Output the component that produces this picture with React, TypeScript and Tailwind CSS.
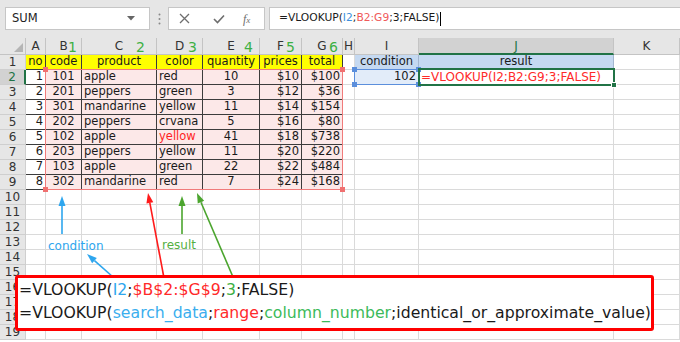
import React from "react";

const COLS = ["A", "B", "C", "D", "E", "F", "G", "H", "I", "J", "K"];

// tabla de ejemplo (filas 2-9)
const DATA: string[][] = [
  ["1", "101", "apple", "red", "10", "$10", "$100"],
  ["2", "201", "peppers", "green", "3", "$12", "$36"],
  ["3", "301", "mandarine", "yellow", "11", "$14", "$154"],
  ["4", "202", "peppers", "crvana", "5", "$16", "$80"],
  ["5", "102", "apple", "yellow", "41", "$18", "$738"],
  ["6", "203", "peppers", "yellow", "11", "$20", "$220"],
  ["7", "103", "apple", "green", "22", "$22", "$484"],
  ["8", "302", "mandarine", "red", "7", "$24", "$168"],
];
const HEAD = ["no", "code", "product", "color", "quantity", "prices", "total"];
const ALIGN = ["justify-end", "justify-center", "justify-start", "justify-start", "justify-center", "justify-end", "justify-end"];

// numeros verdes junto a las letras de columna
const MARKS: Record<string, { n: string; cls: string }> = {
  B: { n: "1", cls: "right-[4px]" },
  C: { n: "2", cls: "right-[11px]" },
  D: { n: "3", cls: "right-[5px]" },
  E: { n: "4", cls: "right-[6px]" },
  F: { n: "5", cls: "right-[6px]" },
  G: { n: "6", cls: "right-[4px]" },
};

function cellText(r: number, c: number): string {
  if (r === 1) {
    if (c < 7) return HEAD[c];
    if (c === 8) return "condition";
    if (c === 9) return "result";
    return "";
  }
  if (r >= 2 && r <= 9 && c < 7) return DATA[r - 2][c];
  if (r === 2 && c === 8) return "102";
  return "";
}

function cellClass(r: number, c: number): string {
  const base =
    "h-[15px] flex items-center px-[2px] overflow-hidden whitespace-nowrap text-[11.5px] leading-none border-r border-b";
  let look = "bg-white border-[#dadada] text-[#1a1a1a]";
  if (r <= 9 && c <= 6) {
    if (r === 1) look = "bg-[#ffff00] border-[#3c3c3c] text-[#1a1a1a]";
    else if (c === 0) look = "bg-white border-[#3c3c3c] text-[#1a1a1a]";
    else look = "bg-[#fce8e8] border-[#3c3c3c] text-[#1a1a1a]";
  } else if (r === 1 && (c === 8 || c === 9)) {
    look = "bg-[#c5d9f1] border-[#a3b6cf] text-[#1a1a1a]";
  } else if (r === 2 && c === 8) {
    look = "bg-[#e2ecf9] border-[#dadada] text-[#1a1a1a]";
  }
  let align = "justify-start";
  if (r === 1) align = "justify-center";
  else if (c <= 6) align = ALIGN[c];
  else if (r === 2 && c === 8) align = "justify-end";
  if (r === 6 && c === 3) look = look.replace("text-[#1a1a1a]", "text-[#ff1f1f]");
  return `${base} ${look} ${align}`;
}

function Arrow({ x1, y1, x2, y2, color }: { x1: number; y1: number; x2: number; y2: number; color: string }) {
  const dx = x2 - x1;
  const dy = y2 - y1;
  const len = Math.hypot(dx, dy);
  const ux = dx / len;
  const uy = dy / len;
  const hl = 10;
  const hw = 3.5;
  const bx = x2 - ux * hl;
  const by = y2 - uy * hl;
  const pts = `${x2},${y2} ${bx - uy * hw},${by + ux * hw} ${bx + uy * hw},${by - ux * hw}`;
  return (
    <g>
      <line x1={x1} y1={y1} x2={bx} y2={by} stroke={color} strokeWidth={1.6} />
      <polygon points={pts} fill={color} />
    </g>
  );
}

// marco de referencia de formula con cuadritos en las esquinas
function RefBox({ cls, color }: { cls: string; color: string }) {
  const sq = `absolute w-[5px] h-[5px] ${color}`;
  return (
    <div className={`absolute border ${cls}`}>
      <div className={`${sq} -left-[3px] -top-[3px]`} />
      <div className={`${sq} -right-[3px] -top-[3px]`} />
      <div className={`${sq} -left-[3px] -bottom-[3px]`} />
      <div className={`${sq} -right-[3px] -bottom-[3px]`} />
    </div>
  );
}

function FormulaBar() {
  return (
    <div className="h-[38px] bg-[#e6e6e6] flex items-start pt-[7px]">
      <div className="ml-[5px] w-[145px] h-[23px] bg-white border border-[#c6c6c6] flex items-center justify-between pl-[6px] pr-[14px]">
        <span className="text-[11.5px] text-[#222]">SUM</span>
        <svg width="8" height="5" viewBox="0 0 8 5">
          <polygon points="0,0 8,0 4,4.5" fill="#666" />
        </svg>
      </div>
      <div className="w-[18px] h-[23px] flex items-center justify-center">
        <svg width="3" height="12" viewBox="0 0 3 12">
          <circle cx="1.5" cy="1.5" r="1" fill="#888" />
          <circle cx="1.5" cy="6" r="1" fill="#888" />
          <circle cx="1.5" cy="10.5" r="1" fill="#888" />
        </svg>
      </div>
      <div className="w-[97px] h-[23px] bg-white border border-[#c6c6c6] flex items-center">
        <svg className="ml-[10px]" width="11" height="11" viewBox="0 0 11 11">
          <path d="M1 1 L10 10 M10 1 L1 10" stroke="#6e6e6e" strokeWidth="1.3" />
        </svg>
        <svg className="ml-[23px]" width="12" height="10" viewBox="0 0 12 10">
          <path d="M1 5 L4.5 8.5 L11 1.5" stroke="#6e6e6e" strokeWidth="1.6" fill="none" />
        </svg>
        <span className="ml-[18px] italic text-[12px] text-[#6e6e6e] font-['Liberation_Serif',serif] leading-none">
          f<span className="text-[9px]">x</span>
        </span>
      </div>
      <div className="ml-[4px] flex-1 h-[23px] bg-white border border-[#c6c6c6] border-r-0 flex items-center pl-[9px] text-[10.7px] text-[#1a1a1a]">
        <span>=VLOOKUP(</span>
        <span className="text-[#3b8fdc]">I2</span>
        <span>;</span>
        <span className="text-[#f05a5a]">B2:G9</span>
        <span>;3;FALSE)</span>
        <span className="ml-[1px] w-px h-[14px] bg-black" />
      </div>
    </div>
  );
}

export default function App() {
  const rows = Array.from({ length: 19 }, (_, i) => i + 1);
  return (
    <div className="relative w-[680px] h-[342px] overflow-hidden bg-white font-['DejaVu_Sans',sans-serif]">
      <FormulaBar />

      <div className="grid grid-cols-[26px_20px_36px_75px_46px_57px_42px_41px_12px_64px_195px_66px]">
        {/* cabecera de columnas */}
        <div className="h-[17px] bg-[#e6e6e6] border-r border-b border-[#c4c4c4] flex items-end justify-end pr-[2px] pb-[2px]">
          <svg width="9" height="9" viewBox="0 0 9 9">
            <polygon points="9,0 9,9 0,9" fill="#b5b5b5" />
          </svg>
        </div>
        {COLS.map((c) =>
          c === "J" ? (
            <div
              key={c}
              className="h-[17px] bg-[#d2d2d2] border-r border-[#c4c4c4] border-b-2 border-b-[#217346] flex items-center justify-center text-[12px] text-[#217346]"
            >
              {c}
            </div>
          ) : (
            <div
              key={c}
              className="relative h-[17px] bg-[#e6e6e6] border-r border-b border-[#c4c4c4] flex items-center justify-center text-[12px] text-[#333]"
            >
              {c}
              {MARKS[c] ? (
                <span className={`absolute top-[1px] text-[14px] leading-[16px] text-[#3cb043] ${MARKS[c].cls}`}>
                  {MARKS[c].n}
                </span>
              ) : null}
            </div>
          )
        )}

        {rows.map((r) => (
          <React.Fragment key={r}>
            {r === 2 ? (
              <div className="h-[15px] bg-[#d2d2d2] border-b border-[#cfcfcf] border-r-2 border-r-[#217346] flex items-center justify-center text-[12px] text-[#217346]">
                {r}
              </div>
            ) : (
              <div className="h-[15px] bg-[#e6e6e6] border-r border-b border-[#cfcfcf] flex items-center justify-center text-[12px] text-[#333]">
                {r}
              </div>
            )}
            {COLS.map((_, c) => (
              <div key={c} className={cellClass(r, c)}>
                {r === 2 && c === 9 ? (
                  <span className="text-[#ff2a2a] text-[12px]">=VLOOKUP(I2;B2:G9;3;FALSE)</span>
                ) : (
                  cellText(r, c)
                )}
              </div>
            ))}
          </React.Fragment>
        ))}
      </div>

      {/* rangos resaltados y celda activa */}
      <RefBox cls="left-[45px] top-[69px] w-[298px] h-[121px] border-[#f07b7b]" color="bg-[#f07070]" />
      <RefBox cls="left-[354px] top-[69px] w-[65px] h-[16px] border-[#5b8fdc]" color="bg-[#5b8fdc]" />
      <div className="absolute left-[418px] top-[68px] w-[197px] h-[18px] border-2 border-[#217346]">
        <div className="absolute -right-[4px] -bottom-[4px] w-[6px] h-[6px] bg-[#217346] border border-white" />
      </div>

      {/* flechas */}
      <svg className="absolute left-0 top-0 pointer-events-none" width="680" height="342" viewBox="0 0 680 342">
        <Arrow x1={62} y1={234} x2={62} y2={196} color="#2ea6ee" />
        <Arrow x1={113} y1={277} x2={87} y2={254} color="#2ea6ee" />
        <Arrow x1={164} y1={278} x2={148} y2={193} color="#ff1a1a" />
        <Arrow x1={182} y1={234} x2={182} y2={196} color="#4ba52e" />
        <Arrow x1={233} y1={277} x2={197} y2={193} color="#4ba52e" />
      </svg>
      <span className="absolute left-[48px] top-[238px] text-[12px] leading-[16px] text-[#2ea6ee]">condition</span>
      <span className="absolute left-[162px] top-[237px] text-[12px] leading-[16px] text-[#55b043]">result</span>

      {/* cuadro con la formula */}
      <div className="absolute left-[15px] top-[275px] w-[639px] h-[56px] border-[3px] border-[#ff0000] rounded-[3px] bg-white pl-[1px] text-[15.7px] leading-[23px] text-[#1a1a1a] whitespace-nowrap">
        <div>
          =VLOOKUP(<span className="text-[#2ea6ee]">I2</span>;<span className="text-[#ff2a2a]">$B$2:$G$9</span>;
          <span className="text-[#3cb043]">3</span>;FALSE)
        </div>
        <div>
          =VLOOKUP(<span className="text-[#3aaeee]">search_data</span>;<span className="text-[#ff2a2a]">range</span>;
          <span className="text-[#3cba5a]">column_number</span>;identical_or_approximate_value)
        </div>
      </div>
    </div>
  );
}
